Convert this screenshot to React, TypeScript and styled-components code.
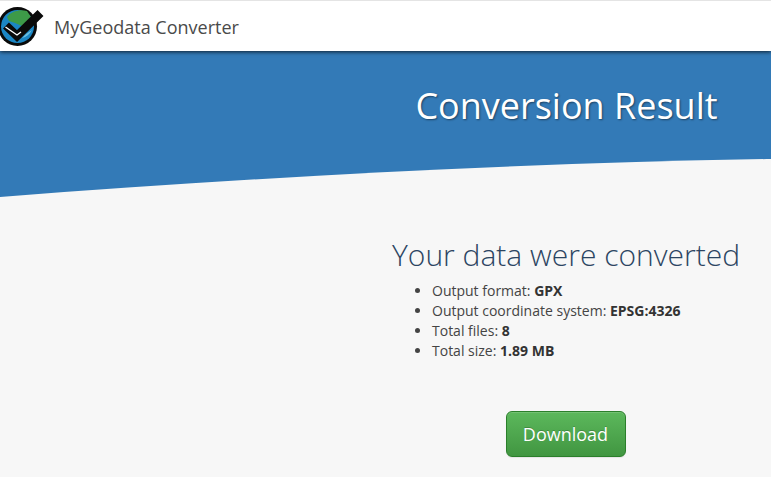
import React from "react";
import styled, { createGlobalStyle } from "styled-components";

const GlobalStyle = createGlobalStyle`
html, body {
  margin: 0;
  padding: 0;
  background: #f7f7f7;
  font-family: "Open Sans", "Liberation Sans", sans-serif;
  color: #333;
  overflow: hidden;
}
`

const Page = styled.div`
width: 771px;
height: 477px;
overflow: hidden;
`
const Navbar = styled.header`
height: 50px;
background: #fff;
border-top: 1px solid #e4e4e4;
display: flex;
align-items: flex-start;
position: relative;
z-index: 2;
box-shadow: 0 1px 4px rgba(0, 0, 0, .75);
`
const LogoMark = styled.svg`
flex-shrink: 0;
display: block;
`
const Brand = styled.a`
font-size: 18px;
line-height: 24px;
color: #4a4a4a;
margin-left: 10px;
margin-top: 14px;
`
const Hero = styled.section`
height: 146px;
background: #337ab7;
position: relative;
display: flex;
justify-content: flex-end;
`
const Wave = styled.svg`
position: absolute;
left: 0;
bottom: 0;
display: block;
`
const HeroTitle = styled.h1`
width: 361px;
margin: 31px 24px 0 0;
text-align: center;
font-size: 36px;
line-height: 48px;
font-weight: 400;
color: #fff;
text-shadow: 1px 1px 2px rgba(0, 0, 0, .45);
`
const Content = styled.main`
display: flex;
justify-content: flex-end;
`
const Result = styled.div`
width: 361px;
margin-right: 25px;
padding-top: 38px;
`
const Heading = styled.h2`
margin: 0 0 6px;
padding-left: 1px;
text-align: center;
font-size: 30px;
line-height: 40px;
font-weight: 300;
color: #2c4562;
`
const Facts = styled.ul`
margin: 0;
padding: 0 0 0 47px;
font-size: 14px;
line-height: 20px;
color: #444;
`
const Value = styled.b`
font-weight: 700;
color: #333;
`
const Actions = styled.div`
display: flex;
justify-content: center;
margin-top: 50px;
`
const DownloadButton = styled.button`
width: 120px;
height: 46px;
border: 1px solid #2b7f2b;
border-radius: 6px;
background: linear-gradient(to bottom, #5cb85c 0%, #419641 100%);
color: #fff;
font-family: inherit;
font-size: 18px;
text-shadow: 0 -1px 0 rgba(0, 0, 0, .2);
box-shadow: inset 0 1px 0 rgba(255, 255, 255, .15), 0 1px 1px rgba(0, 0, 0, .075);
`

const Logo = () => (
    <LogoMark width="44" height="47" viewBox="0 0 44 47">
        <circle cx="17.5" cy="25.5" r="19.5" fill="#0a0a0a" />
        <circle cx="17.5" cy="25.5" r="16.5" fill="#1b86c4" />
        <path d="M7 16 C11 10 20 8 27 10 L31 16 L22 25 L15 22 L9 20 Z" fill="#3d9a48" />
        <path d="M22 37 C26 36 30 33 32 29 L26 33 Z" fill="#6cbfe0" />
        <path d="M6 24.5 L17 35 L40.5 12" fill="none" stroke="#0a0a0a" strokeWidth="8.5" strokeLinejoin="miter" />
        <path d="M5.5 26 L17 34 L21 31" fill="none" stroke="#fff" strokeWidth="1.4" />
    </LogoMark>
)

const App = () => {
    return (
        <Page>
            <GlobalStyle />
            <Navbar>
                <Logo />
                <Brand>MyGeodata Converter</Brand>
            </Navbar>
            <Hero>
                <Wave width="771" height="40" viewBox="0 0 771 40">
                    <path d="M0 40 C257 20.3 514 6.1 771 2 L771 40 Z" fill="#f7f7f7" />
                </Wave>
                <HeroTitle>Conversion Result</HeroTitle>
            </Hero>
            <Content>
                <Result>
                    <Heading>Your data were converted</Heading>
                    <Facts>
                        <li>Output format: <Value>GPX</Value></li>
                        <li>Output coordinate system: <Value>EPSG:4326</Value></li>
                        <li>Total files: <Value>8</Value></li>
                        <li>Total size: <Value>1.89 MB</Value></li>
                    </Facts>
                    <Actions>
                        <DownloadButton>Download</DownloadButton>
                    </Actions>
                </Result>
            </Content>
        </Page>
    )
}

export default App
